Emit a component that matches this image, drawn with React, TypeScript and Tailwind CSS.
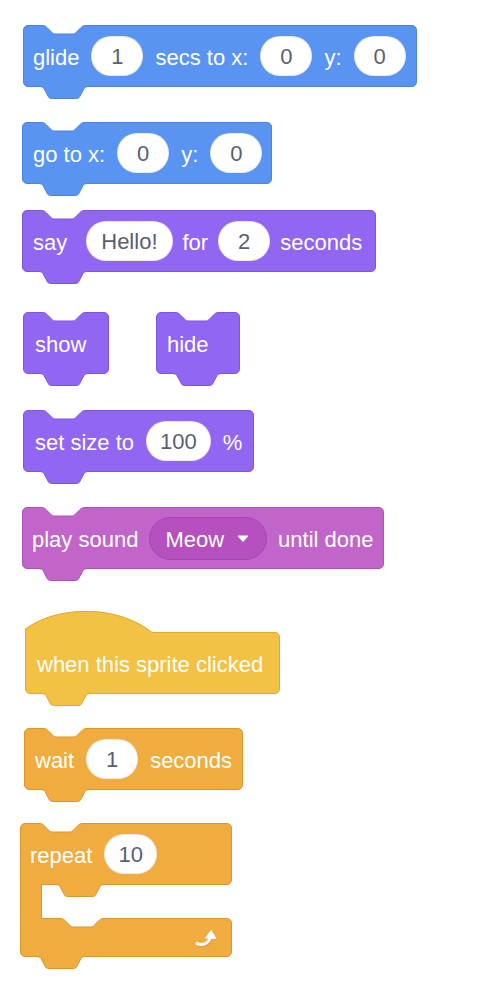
import React from "react";

type Theme = { cls: string; fill: string; stroke: string };

const BLUE: Theme = { cls: "bg-[#5994F2] border-[#4B84DE]", fill: "#5994F2", stroke: "#4B84DE" };
const PURPLE: Theme = { cls: "bg-[#9066F2] border-[#7D55DC]", fill: "#9066F2", stroke: "#7D55DC" };
const PINK: Theme = { cls: "bg-[#C265CA] border-[#AC52B5]", fill: "#C265CA", stroke: "#AC52B5" };
const YELLOW: Theme = { cls: "bg-[#F3C144] border-[#DDAA31]", fill: "#F3C144", stroke: "#DDAA31" };
const ORANGE: Theme = { cls: "bg-[#F1AC40] border-[#DA962F]", fill: "#F1AC40", stroke: "#DA962F" };

function Notch({ stroke, className }: { stroke: string; className: string }) {
  return (
    <svg className={`absolute top-[-1px] ${className}`} width="44" height="10" viewBox="0 0 44 10" aria-hidden="true">
      <path
        d="M0 0 H44 V0.5 C41 0.5 40 1.5 38.5 3 L34 7.5 C33 8.5 32 9 30 9 H14 C12 9 11 8.5 10 7.5 L5.5 3 C4 1.5 3 0.5 0 0.5 Z"
        fill="#ffffff"
      />
      <path
        d="M0 0.5 C3 0.5 4 1.5 5.5 3 L10 7.5 C11 8.5 12 9 14 9 H30 C32 9 33 8.5 34 7.5 L38.5 3 C40 1.5 41 0.5 44 0.5"
        fill="none"
        stroke={stroke}
        strokeWidth="1"
      />
    </svg>
  );
}

function Tab({ fill, stroke, className }: { fill: string; stroke: string; className: string }) {
  return (
    <svg className={`absolute top-full z-10 ${className}`} width="50" height="14" viewBox="0 0 50 14" aria-hidden="true">
      <path
        d="M0 0 H50 V0.5 C47 0.5 46 1.2 45 2.5 L40.5 11 C39.5 12.5 38.5 12.5 36 12.5 H14 C11.5 12.5 10.5 12.5 9.5 11 L5 2.5 C4 1.2 3 0.5 0 0.5 Z"
        fill={fill}
      />
      <path
        d="M0 0.5 C3 0.5 4 1.2 5 2.5 L9.5 11 C10.5 12.5 11.5 12.5 14 12.5 H36 C38.5 12.5 39.5 12.5 40.5 11 L45 2.5 C46 1.2 47 0.5 50 0.5"
        fill="none"
        stroke={stroke}
        strokeWidth="1"
      />
    </svg>
  );
}

function Block({
  theme,
  className,
  children,
  notch = true,
  tab = true,
}: {
  theme: Theme;
  className: string;
  children?: React.ReactNode;
  notch?: boolean;
  tab?: boolean;
}) {
  return (
    <div className={`relative flex h-[62px] items-center border ${theme.cls} ${className}`}>
      {notch && <Notch stroke={theme.stroke} className="left-[18px]" />}
      {children}
      {tab && <Tab fill={theme.fill} stroke={theme.stroke} className="left-[15px]" />}
    </div>
  );
}

function Label({ children }: { children: React.ReactNode }) {
  return <span className="whitespace-nowrap pt-[4px] text-white">{children}</span>;
}

function Field({ children, className = "" }: { children: React.ReactNode; className?: string }) {
  return (
    <div
      className={`flex h-[40px] min-w-[52px] items-center justify-center whitespace-nowrap rounded-full border border-[#00000014] bg-white px-[13px] pt-[2px] text-[#575E75] ${className}`}
    >
      {children}
    </div>
  );
}

function RepeatArrow() {
  return (
    <svg width="26" height="20" viewBox="0 0 26 20" aria-hidden="true">
      <g transform="translate(0.7 0.9)" opacity="0.3">
        <path d="M3 15.5 C9 18 15 15.5 16.5 9" fill="none" stroke="#B5781F" strokeWidth="3.2" strokeLinecap="round" />
        <path d="M11.5 10 L17 2.5 L22 10.5 Z" fill="#B5781F" />
      </g>
      <path d="M3 15.5 C9 18 15 15.5 16.5 9" fill="none" stroke="#ffffff" strokeWidth="3" strokeLinecap="round" />
      <path d="M11.5 10 L17 2.5 L22 10.5 Z" fill="#ffffff" stroke="#ffffff" strokeWidth="1" strokeLinejoin="round" />
    </svg>
  );
}

export default function App() {
  return (
    <div className="min-h-[986px] w-[490px] bg-white font-['Liberation_Sans',Arial,Helvetica,sans-serif] text-[22px] leading-none">
      <div className="flex flex-col items-start pt-[25px] pb-[20px]">
        {/* glide */}
        <Block theme={BLUE} className="ml-[23px] gap-[12px] rounded-[5px] pl-[9px] pr-[10px]">
          <Label>glide</Label>
          <Field>1</Field>
          <Label>secs to x:</Label>
          <Field>0</Field>
          <Label>y:</Label>
          <Field>0</Field>
        </Block>

        {/* go to */}
        <Block theme={BLUE} className="ml-[22px] mt-[35px] gap-[12px] rounded-[5px] pl-[10px] pr-[9px]">
          <Label>go to x:</Label>
          <Field>0</Field>
          <Label>y:</Label>
          <Field>0</Field>
        </Block>

        {/* say */}
        <Block theme={PURPLE} className="ml-[22px] mt-[26px] gap-[10px] rounded-[5px] pl-[10px] pr-[13px]">
          <Label>say</Label>
          <Field className="ml-[9px] px-[14px]">Hello!</Field>
          <Label>for</Label>
          <Field>2</Field>
          <Label>seconds</Label>
        </Block>

        {/* show / hide */}
        <div className="mt-[40px] flex">
          <Block theme={PURPLE} className="ml-[23px] w-[86px] rounded-[5px] pl-[11px]">
            <Label>show</Label>
          </Block>
          <Block theme={PURPLE} className="ml-[47px] w-[84px] rounded-[5px] pl-[10px]">
            <Label>hide</Label>
          </Block>
        </div>

        {/* set size */}
        <Block theme={PURPLE} className="ml-[23px] mt-[36px] gap-[12px] rounded-[5px] pl-[11px] pr-[11px]">
          <Label>set size to</Label>
          <Field>100</Field>
          <Label>%</Label>
        </Block>

        {/* play sound */}
        <Block theme={PINK} className="ml-[22px] mt-[35px] gap-[11px] rounded-[5px] pl-[9px] pr-[9px]">
          <Label>play sound</Label>
          <div className="flex h-[43px] items-center gap-[13px] rounded-full border border-[#A645B0] bg-[#B550BE] pl-[15px] pr-[17px]">
            <span className="pt-[3px] text-white">Meow</span>
            <svg width="12" height="7" viewBox="0 0 12 7" aria-hidden="true">
              <path d="M1 1 H11 L6 6.5 Z" fill="#ffffff" stroke="#ffffff" strokeWidth="1" strokeLinejoin="round" />
            </svg>
          </div>
          <Label>until done</Label>
        </Block>

        {/* when this sprite clicked (hat) */}
        <Block
          theme={YELLOW}
          notch={false}
          className="ml-[25px] mt-[63px] w-[255px] rounded-[5px] rounded-tl-none pl-[11px]"
        >
          <svg className="absolute left-[-1px] top-[-23px]" width="128" height="24" viewBox="0 0 128 24" aria-hidden="true">
            <path d="M0 24 V19 C33 -5.5 93 -5.5 127 22 L128 22 V24 Z" fill="#F3C144" />
            <path d="M0.5 24 V19 C33 -5 93 -5 127 22.5 H128" fill="none" stroke="#DDAA31" strokeWidth="1" />
          </svg>
          <Label>when this sprite clicked</Label>
        </Block>

        {/* wait */}
        <Block theme={ORANGE} className="ml-[24px] mt-[34px] gap-[12px] rounded-[5px] pl-[10px] pr-[10px]">
          <Label>wait</Label>
          <Field>1</Field>
          <Label>seconds</Label>
        </Block>

        {/* repeat (C block) */}
        <div className="ml-[20px] mt-[33px] flex w-[212px] flex-col">
          <Block theme={ORANGE} tab={false} className="gap-[12px] rounded-[5px] rounded-bl-none pl-[9px]">
            <Label>repeat</Label>
            <Field>10</Field>
            <Tab fill={ORANGE.fill} stroke={ORANGE.stroke} className="left-[34px]" />
          </Block>
          <div className="relative z-20 -my-px h-[35px] w-[22px] border-x border-[#DA962F] bg-[#F1AC40]" />
          <div className="relative flex h-[39px] items-center justify-end rounded-[5px] rounded-tl-none border border-[#DA962F] bg-[#F1AC40] pr-[11px]">
            <Notch stroke={ORANGE.stroke} className="left-[39px]" />
            <RepeatArrow />
            <Tab fill={ORANGE.fill} stroke={ORANGE.stroke} className="left-[15px]" />
          </div>
        </div>
      </div>
    </div>
  );
}
